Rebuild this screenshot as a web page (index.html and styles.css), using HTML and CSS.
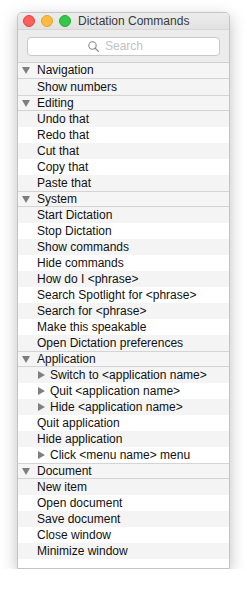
FILE: index.html
```html
<!DOCTYPE html>
<html lang="en">
<head>
    <meta charset="UTF-8">
    <meta name="viewport" content="width=device-width, initial-scale=1.0">
    <title>Dictation Commands</title>
    <link rel="stylesheet" href="styles.css">
</head>
<body>
    <div class="window">
        <div class="titlebar">
            <div class="lights">
                <span class="light red"></span>
                <span class="light yellow"></span>
                <span class="light green"></span>
            </div>
            <div class="title">Dictation Commands</div>
        </div>
        <div class="toolbar">
            <div class="search">
                <svg class="glass" width="11" height="11" viewBox="0 0 11 11">
                    <circle cx="4.5" cy="4.5" r="3.7" fill="none" stroke="#8a8a8a" stroke-width="1.1"/>
                    <line x1="7.2" y1="7.2" x2="10.4" y2="10.4" stroke="#8a8a8a" stroke-width="1.3" stroke-linecap="round"/>
                </svg>
                <span class="placeholder">Search</span>
            </div>
        </div>
        <div class="list">
            <div class="group">Navigation</div>
            <div class="row odd">Show numbers</div>

            <div class="group">Editing</div>
            <div class="row odd">Undo that</div>
            <div class="row">Redo that</div>
            <div class="row odd">Cut that</div>
            <div class="row">Copy that</div>
            <div class="row odd">Paste that</div>

            <div class="group">System</div>
            <div class="row odd">Start Dictation</div>
            <div class="row">Stop Dictation</div>
            <div class="row odd">Show commands</div>
            <div class="row">Hide commands</div>
            <div class="row odd">How do I &lt;phrase&gt;</div>
            <div class="row">Search Spotlight for &lt;phrase&gt;</div>
            <div class="row odd">Search for &lt;phrase&gt;</div>
            <div class="row">Make this speakable</div>
            <div class="row odd">Open Dictation preferences</div>

            <div class="group">Application</div>
            <div class="row odd more">Switch to &lt;application name&gt;</div>
            <div class="row more">Quit &lt;application name&gt;</div>
            <div class="row odd more">Hide &lt;application name&gt;</div>
            <div class="row">Quit application</div>
            <div class="row odd">Hide application</div>
            <div class="row more">Click &lt;menu name&gt; menu</div>

            <div class="group">Document</div>
            <div class="row odd">New item</div>
            <div class="row">Open document</div>
            <div class="row odd">Save document</div>
            <div class="row">Close window</div>
            <div class="row odd">Minimize window</div>
        </div>
    </div>
</body>
</html>
```
FILE: styles.css
```css
body {
    margin: 0;
    background: #fff;
    font-family: "Liberation Sans", Arial, sans-serif;
    font-size: 12px;
    color: #111;
}
.window {
    margin: 12px 0 0 17px;
    width: 213px;
    height: 557px;
    box-sizing: border-box;
    border: 1px solid #c4c4c4;
    border-radius: 5px 5px 0 0;
    background: #fff;
    box-shadow: 0 5px 16px rgba(0, 0, 0, 0.25);
    overflow: hidden;
}
.titlebar {
    height: 16px;
    display: flex;
    align-items: center;
    background: linear-gradient(#ececec, #e2e2e2);
    border-bottom: 1px solid #d6d6d6;
}
.lights {
    display: flex;
    gap: 6px;
    padding-left: 5px;
}
.light {
    width: 12px;
    height: 12px;
    border-radius: 50%;
    box-sizing: border-box;
}
.red { background: #fc605c; border: 1px solid #e0443e; }
.yellow { background: #fdbc40; border: 1px solid #dea236; }
.green { background: #34c84a; border: 1px solid #27aa35; }
.title {
    margin-left: 7px;
    font-size: 12px;
    color: #3a3a3a;
}
.toolbar {
    height: 32px;
    display: flex;
    align-items: center;
    padding: 0 9px;
    background: #ececec;
    border-bottom: 1px solid #cfcfcf;
}
.search {
    flex: 1;
    height: 19px;
    box-sizing: border-box;
    border: 1px solid #c9c9c9;
    border-radius: 4px;
    background: #fff;
    display: flex;
    align-items: center;
    justify-content: center;
    gap: 6px;
    padding-right: 16px;
}
.placeholder {
    font-size: 12px;
    color: #c2c2c2;
}
.list {
    font-size: 12px;
}
.group, .row {
    height: 16px;
    line-height: 16px;
    box-sizing: border-box;
    white-space: nowrap;
}
.group {
    position: relative;
    padding-left: 19px;
    background: #f5f5f5;
    border-top: 1px solid #d4d4d4;
    border-bottom: 1px solid #d4d4d4;
    line-height: 14px;
}
.list .group:first-child {
    border-top: none;
    line-height: 15px;
}
.group::before {
    content: "";
    position: absolute;
    left: 4px;
    top: 4px;
    border-left: 4.5px solid transparent;
    border-right: 4.5px solid transparent;
    border-top: 7px solid #7f7f7f;
}
.row {
    padding-left: 19px;
    background: #fff;
}
.row.odd {
    background: #f4f4f4;
}
.row.more {
    position: relative;
    padding-left: 32px;
}
.row.more::before {
    content: "";
    position: absolute;
    left: 20px;
    top: 4px;
    border-top: 4.5px solid transparent;
    border-bottom: 4.5px solid transparent;
    border-left: 7px solid #7f7f7f;
}
```
